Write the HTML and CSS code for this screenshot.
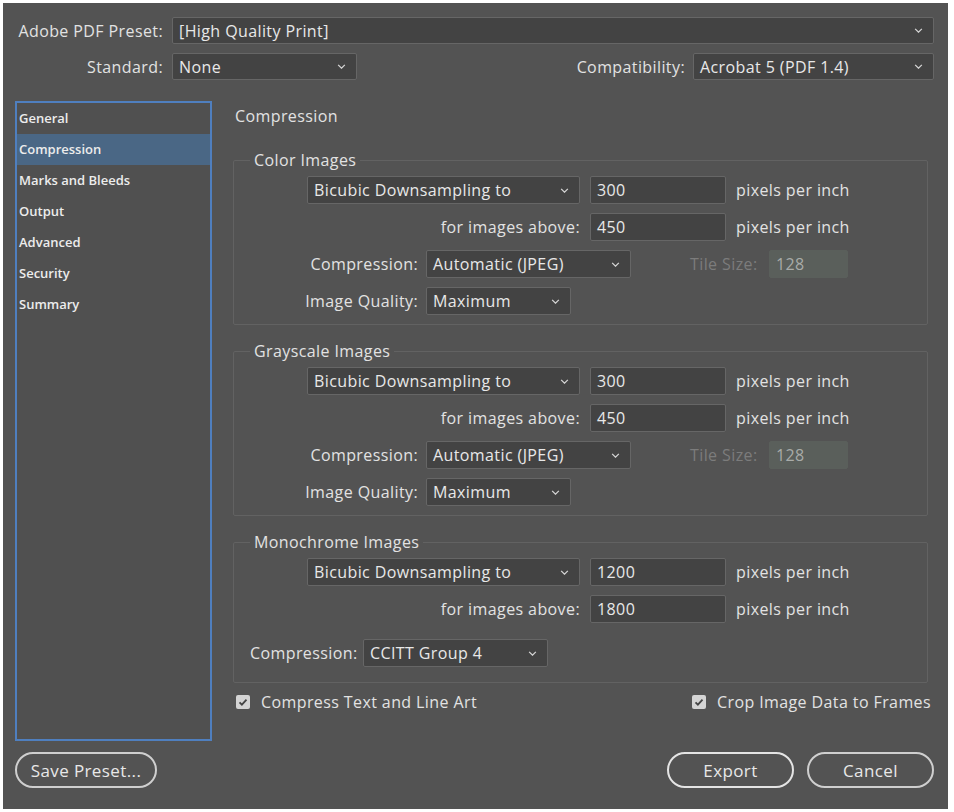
FILE: index.html
```html
<!DOCTYPE html>
<html lang="en">
<head>
    <meta charset="UTF-8" />
    <title>Export Adobe PDF</title>
    <link rel="stylesheet" href="styles.css">
</head>
<body>
    <div class="dialog">

        <div class="top">
            <span class="label">Adobe PDF Preset:</span>
            <div class="field select"><span class="value">[High Quality Print]</span><svg class="chev" viewBox="0 0 10 6"><path d="M1 1l4 4 4-4"/></svg></div>

            <span class="label">Standard:</span>
            <div class="top-row">
                <div class="field select standard"><span class="value">None</span><svg class="chev" viewBox="0 0 10 6"><path d="M1 1l4 4 4-4"/></svg></div>
                <span class="compat-label">Compatibility:</span>
                <div class="field select compat"><span class="value">Acrobat 5 (PDF 1.4)</span><svg class="chev" viewBox="0 0 10 6"><path d="M1 1l4 4 4-4"/></svg></div>
            </div>
        </div>

        <div class="main">
            <ul class="sidebar">
                <li>General</li>
                <li class="active">Compression</li>
                <li>Marks and Bleeds</li>
                <li>Output</li>
                <li>Advanced</li>
                <li>Security</li>
                <li>Summary</li>
            </ul>

            <div class="content">
                <h2>Compression</h2>

                <fieldset class="group">
                    <legend>Color Images</legend>
                    <div class="rows">
                        <div class="row">
                            <div class="field select down"><span class="value">Bicubic Downsampling to</span><svg class="chev" viewBox="0 0 10 6"><path d="M1 1l4 4 4-4"/></svg></div>
                            <div class="field num">300</div>
                            <span class="unit">pixels per inch</span>
                        </div>
                        <div class="row">
                            <span class="lbl-wide">for images above:</span>
                            <div class="field num">450</div>
                            <span class="unit">pixels per inch</span>
                        </div>
                        <div class="row">
                            <span class="lbl">Compression:</span>
                            <div class="field select comp"><span class="value">Automatic (JPEG)</span><svg class="chev" viewBox="0 0 10 6"><path d="M1 1l4 4 4-4"/></svg></div>
                            <span class="tile-lbl">Tile Size:</span>
                            <div class="field tile">128</div>
                        </div>
                        <div class="row">
                            <span class="lbl">Image Quality:</span>
                            <div class="field select quality"><span class="value">Maximum</span><svg class="chev" viewBox="0 0 10 6"><path d="M1 1l4 4 4-4"/></svg></div>
                        </div>
                    </div>
                </fieldset>

                <fieldset class="group">
                    <legend>Grayscale Images</legend>
                    <div class="rows">
                        <div class="row">
                            <div class="field select down"><span class="value">Bicubic Downsampling to</span><svg class="chev" viewBox="0 0 10 6"><path d="M1 1l4 4 4-4"/></svg></div>
                            <div class="field num">300</div>
                            <span class="unit">pixels per inch</span>
                        </div>
                        <div class="row">
                            <span class="lbl-wide">for images above:</span>
                            <div class="field num">450</div>
                            <span class="unit">pixels per inch</span>
                        </div>
                        <div class="row">
                            <span class="lbl">Compression:</span>
                            <div class="field select comp"><span class="value">Automatic (JPEG)</span><svg class="chev" viewBox="0 0 10 6"><path d="M1 1l4 4 4-4"/></svg></div>
                            <span class="tile-lbl">Tile Size:</span>
                            <div class="field tile">128</div>
                        </div>
                        <div class="row">
                            <span class="lbl">Image Quality:</span>
                            <div class="field select quality"><span class="value">Maximum</span><svg class="chev" viewBox="0 0 10 6"><path d="M1 1l4 4 4-4"/></svg></div>
                        </div>
                    </div>
                </fieldset>

                <fieldset class="group mono">
                    <legend>Monochrome Images</legend>
                    <div class="rows">
                        <div class="row">
                            <div class="field select down"><span class="value">Bicubic Downsampling to</span><svg class="chev" viewBox="0 0 10 6"><path d="M1 1l4 4 4-4"/></svg></div>
                            <div class="field num">1200</div>
                            <span class="unit">pixels per inch</span>
                        </div>
                        <div class="row">
                            <span class="lbl-wide">for images above:</span>
                            <div class="field num">1800</div>
                            <span class="unit">pixels per inch</span>
                        </div>
                        <div class="row mono-comp">
                            <span class="lbl-left">Compression:</span>
                            <div class="field select ccitt"><span class="value">CCITT Group 4</span><svg class="chev" viewBox="0 0 10 6"><path d="M1 1l4 4 4-4"/></svg></div>
                        </div>
                    </div>
                </fieldset>

                <div class="options">
                    <label class="option"><span class="check"><svg viewBox="0 0 14 14"><path d="M3.5 7.3l2.4 2.4 4.6-5"/></svg></span>Compress Text and Line Art</label>
                    <label class="option right"><span class="check"><svg viewBox="0 0 14 14"><path d="M3.5 7.3l2.4 2.4 4.6-5"/></svg></span>Crop Image Data to Frames</label>
                </div>
            </div>
        </div>

        <div class="footer">
            <button class="btn save">Save Preset...</button>
            <button class="btn export">Export</button>
            <button class="btn cancel">Cancel</button>
        </div>

    </div>
</body>
</html>
```

FILE: styles.css
```css
body {
    margin: 0;
    background-color: #fff;
    font-family: "Open Sans", "Noto Sans", sans-serif;
    font-size: 16px;
    letter-spacing: 0.4px;
    color: #e2e2e2;
}

.dialog {
    margin: 3px 0 0 3px;
    width: 945px;
    height: 806px;
    box-sizing: border-box;
    background-color: #535353;
    padding: 14px 14px 0 12px;
}

/* top preset rows */
.top {
    display: grid;
    grid-template-columns: 148px 1fr;
    column-gap: 9px;
    row-gap: 9px;
    align-items: center;
}

.top .label {
    text-align: right;
    white-space: nowrap;
}

.top-row {
    display: flex;
    align-items: center;
}

.field {
    height: 27px;
    box-sizing: border-box;
    background-color: #434343;
    border: 1px solid #666;
    border-radius: 2px;
    display: flex;
    align-items: center;
    padding: 0 10px 0 6px;
    color: #e8e8e8;
    white-space: nowrap;
}

.select .value {
    flex: 1;
}

.chev {
    width: 9px;
    height: 5px;
    fill: none;
    stroke: #d6d6d6;
    stroke-width: 1.5;
}

.standard {
    width: 185px;
}

.compat-label {
    margin-left: auto;
    margin-right: 8px;
}

.compat {
    width: 241px;
}

/* sidebar + panel */
.main {
    display: grid;
    grid-template-columns: 197px 1fr;
    column-gap: 21px;
    margin-top: 21px;
    height: 640px;
}

.sidebar {
    list-style: none;
    margin: 0;
    padding: 0;
    border: 2px solid #4f7fbf;
    background-color: #505050;
    font-size: 13px;
    font-weight: 600;
    letter-spacing: 0;
}

.sidebar li {
    height: 31px;
    line-height: 30px;
    padding-left: 2px;
    color: #ececec;
}

.sidebar li.active {
    background-color: #4a6785;
}

.content {
    padding-right: 6px;
}

.content h2 {
    font-size: 16px;
    font-weight: normal;
    line-height: 20px;
    margin: 0 0 24px;
    padding-top: 5px;
    padding-left: 2px;
}

.group {
    margin: 0 0 16px;
    padding: 6px 0 9px;
    border: 1px solid #626262;
    border-radius: 2px;
    min-width: 0;
}

.group legend {
    padding: 0 4px;
    margin-left: 16px;
    line-height: 20px;
}

.group.mono {
    padding-bottom: 15px;
    margin-bottom: 0;
}

.rows {
    display: flex;
    flex-direction: column;
    gap: 9px;
}

.row {
    display: flex;
    align-items: center;
    height: 28px;
    white-space: nowrap;
}

.row .field {
    height: 28px;
}

.down {
    margin-left: 73px;
    width: 273px;
}

.num {
    margin-left: 10px;
    width: 136px;
}

.unit {
    margin-left: 10px;
}

.lbl-wide {
    width: 346px;
    text-align: right;
}

.lbl {
    width: 184px;
    text-align: right;
}

.comp {
    margin-left: 8px;
    width: 205px;
}

.quality {
    margin-left: 8px;
    width: 145px;
}

.tile-lbl {
    margin-left: 59px;
    width: 79px;
    color: #7c7c7c;
}

.field.tile {
    margin-left: 0;
    width: 79px;
    background-color: #5a5f5b;
    border-color: #5a5f5b;
    color: #a9aca9;
}

.mono-comp {
    margin-top: 7px;
}

.lbl-left {
    padding-left: 16px;
    width: 107px;
}

.ccitt {
    margin-left: 6px;
    width: 185px;
}

/* checkboxes */
.options {
    display: flex;
    align-items: center;
    height: 20px;
    margin-top: 9px;
    padding-left: 3px;
    margin-right: -3px;
    white-space: nowrap;
}

.option {
    display: flex;
    align-items: center;
}

.option.right {
    margin-left: auto;
}

.check {
    width: 14px;
    height: 14px;
    background-color: #d4d4d4;
    border-radius: 2px;
    margin-right: 11px;
    display: flex;
}

.check svg {
    width: 14px;
    height: 14px;
    fill: none;
    stroke: #444;
    stroke-width: 1.8;
}

/* buttons */
.footer {
    display: flex;
    margin-top: 11px;
}

.btn {
    height: 36px;
    box-sizing: border-box;
    border: 2px solid #cfcfcf;
    border-radius: 18px;
    background: transparent;
    color: #e8e8e8;
    font-family: "Open Sans", "Noto Sans", sans-serif;
    font-size: 17px;
    letter-spacing: 0.4px;
    padding: 0;
}

.save {
    width: 142px;
}

.export {
    margin-left: auto;
    width: 127px;
    border-color: #e4e4e4;
}

.cancel {
    margin-left: 13px;
    width: 127px;
}
```
